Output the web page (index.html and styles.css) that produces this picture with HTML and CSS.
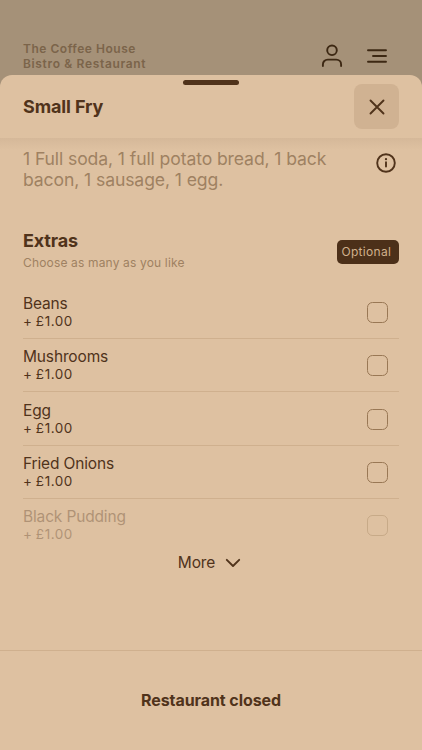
FILE: index.html
```html
<!DOCTYPE html>
<html lang="en">
<head>
<meta charset="utf-8">
<meta name="viewport" content="width=device-width, initial-scale=1">
<title>Small Fry</title>
<link rel="stylesheet" href="styles.css">
</head>
<body>
<header class="topbar">
  <div class="brand">The Coffee House<br><span class="brand-sub">Bistro &amp; Restaurant</span></div>
  <svg class="icon-user" width="22" height="24" viewBox="0 0 22 24"><circle cx="11" cy="6.3" r="4.8"/><path d="M1.9 22v-1.6a4.8 4.8 0 0 1 4.8-4.8h8.6a4.8 4.8 0 0 1 4.8 4.8V22"/></svg>
  <svg class="icon-menu" width="22" height="16" viewBox="0 0 22 16"><path d="M2 2.2h18M7 8h13M2 13.8h18"/></svg>
</header>
<main class="sheet">
  <div class="handle"></div>
  <div class="sheet-head">
    <h1>Small Fry</h1>
    <button class="close" aria-label="Close"><svg width="16" height="16" viewBox="0 0 16 16"><path d="M1.5 1.5l13 13M14.5 1.5l-13 13"/></svg></button>
  </div>
  <div class="content">
    <section class="description">
      <p>1 Full soda, 1 full potato bread, 1 back<br>bacon, 1 sausage, 1 egg.</p>
      <svg class="info" width="20" height="20" viewBox="0 0 20 20"><circle cx="10" cy="10" r="8.8"/><path d="M10 9.2v4.4"/><circle class="dot" cx="10" cy="6.2" r="1.15"/></svg>
    </section>
    <section class="group-head">
      <div>
        <h2>Extras</h2>
        <p class="hint">Choose as many as you like</p>
      </div>
      <span class="tag">Optional</span>
    </section>
    <ul class="options">
      <li><div><p class="name">Beans</p><p class="price">+ £1.00</p></div><span class="check"></span></li>
      <li><div><p class="name">Mushrooms</p><p class="price">+ £1.00</p></div><span class="check"></span></li>
      <li><div><p class="name">Egg</p><p class="price">+ £1.00</p></div><span class="check"></span></li>
      <li><div><p class="name">Fried Onions</p><p class="price">+ £1.00</p></div><span class="check"></span></li>
      <li class="faded"><div><p class="name">Black Pudding</p><p class="price">+ £1.00</p></div><span class="check"></span></li>
    </ul>
    <button class="more">More <svg width="16" height="10" viewBox="0 0 16 10"><path d="M1.8 1.8L8 8l6.2-6.2"/></svg></button>
  </div>
  <footer>Restaurant closed</footer>
</main>
</body>
</html>
```
FILE: styles.css
```css
* { box-sizing: border-box; }
body {
  margin: 0;
  height: 750px;
  overflow: hidden;
  display: flex;
  flex-direction: column;
  background: #a59178;
  color: #50331b;
  font-family: Inter, "Liberation Sans", sans-serif;
}
h1, h2, p, ul { margin: 0; padding: 0; }
button { border: 0; padding: 0; color: inherit; font: inherit; background: none; }
svg { display: block; flex: none; fill: none; stroke: #50331b; stroke-linecap: round; stroke-linejoin: round; stroke-width: 1.9; }
.topbar { height: 75px; flex: none; display: flex; padding: 41px 34px 0 23px; }
.brand { flex: 1; font-size: 12px; line-height: 15px; font-weight: 600; letter-spacing: 0.52px; color: #7b644a; }
.brand-sub { letter-spacing: 0.66px; }
.icon-user { margin: 3px 23px 0 0; stroke: #3d2813; }
.icon-menu { margin-top: 7px; stroke: #3d2813; }
.sheet {
  flex: 1;
  display: flex;
  flex-direction: column;
  background: #dec1a1;
  border-radius: 12px 12px 0 0;
}
.handle { width: 56px; height: 5.5px; margin: 4.5px auto 0; border-radius: 3px; background: #50331b; flex: none; }
.sheet-head { height: 53px; flex: none; display: flex; justify-content: space-between; padding: 0 23px; }
h1 { font-size: 18px; line-height: 24px; font-weight: 700; margin-top: 10px; letter-spacing: -0.12px; }
.close { width: 45px; height: 45px; margin-top: -1px; border-radius: 8px; background: #d0b292; display: flex; align-items: center; justify-content: center; }
.content { flex: 1; display: flex; flex-direction: column; padding: 0 23px; background: linear-gradient(#d5b899, #dec1a1 12px); }
.description { display: flex; justify-content: space-between; height: 91px; padding: 11px 3px 0 0; }
.description p { font-size: 17.6px; line-height: 20.5px; color: #9f8162; letter-spacing: -0.11px; white-space: nowrap; }
.info { margin-top: 4px; }
.info .dot { fill: #50331b; stroke: none; }
.group-head { display: flex; justify-content: space-between; height: 56.7px; }
h2 { font-size: 18px; line-height: 24px; font-weight: 700; letter-spacing: -0.15px; }
.hint { font-size: 12px; line-height: 16px; margin-top: 2px; color: #9f8162; letter-spacing: 0.16px; }
.tag { width: 62px; height: 24px; margin-top: 11px; padding-left: 4.5px; border-radius: 5px; background: #4c3019; color: #d1b18d; font-size: 12px; line-height: 24px; letter-spacing: 0.3px; }
.options { list-style: none; }
.options li { height: 53.4px; display: flex; justify-content: space-between; align-items: center; padding: 1px 11px 0 0; border-bottom: 1px solid #cfb08e; }
.name { font-size: 15.5px; line-height: 18px; letter-spacing: -0.15px; }
.price { font-size: 13.5px; line-height: 17px; letter-spacing: 0.55px; word-spacing: -1px; }
.check { width: 21px; height: 21px; border: 1px solid #997855; border-radius: 5.5px; }
.options .faded { border-color: transparent; }
.faded > * { opacity: 0.32; }
.more { align-self: center; display: flex; align-items: center; gap: 10px; height: 20px; margin: 0 0 0 -3px; font-size: 15.5px; letter-spacing: -0.15px; }
footer { height: 100px; flex: none; border-top: 1px solid #cfb08e; text-align: center; line-height: 98px; font-size: 16px; font-weight: 700; letter-spacing: -0.08px; }
```
